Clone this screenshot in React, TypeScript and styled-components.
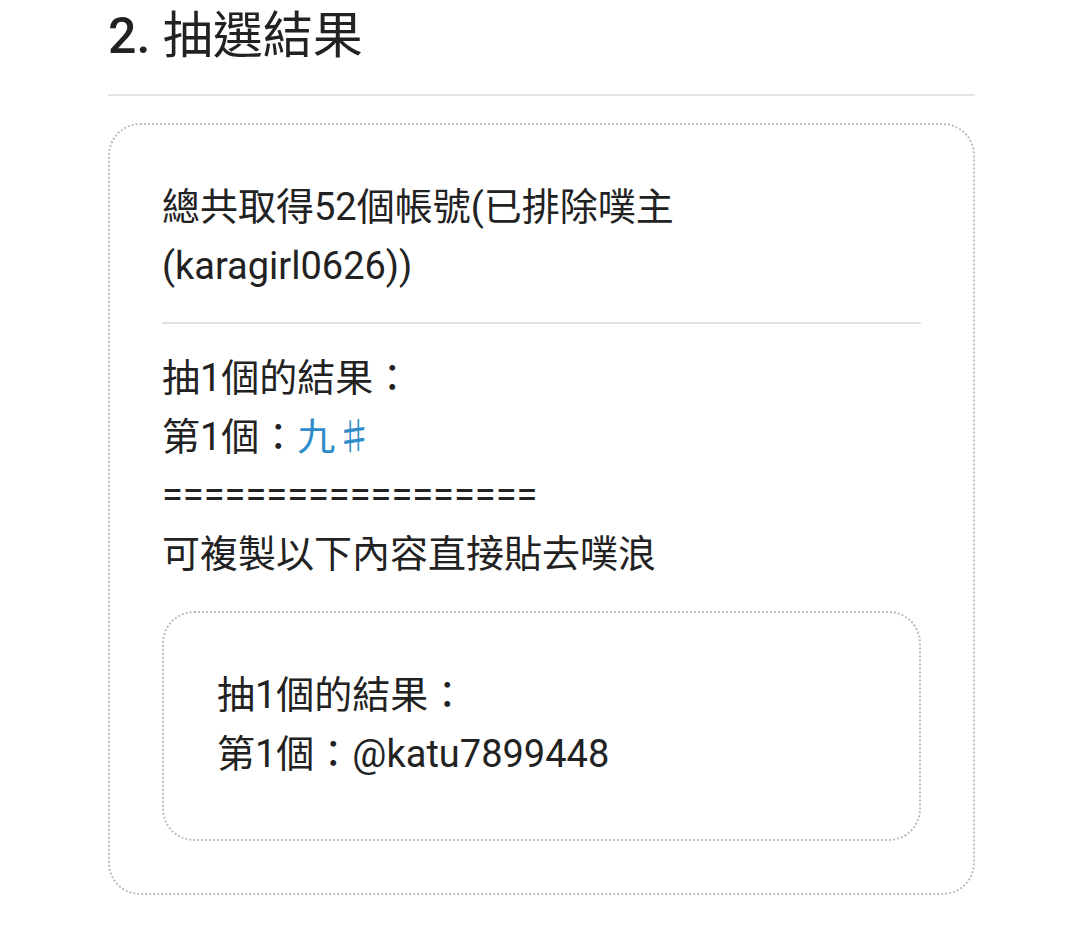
import React from "react";
import styled, { createGlobalStyle } from "styled-components";

const GlobalStyle = createGlobalStyle`
  html, body {
    margin: 0;
    padding: 0;
    background: #ffffff;
  }
  body {
    font-family: Roboto, "Noto Sans CJK TC", "Noto Sans", sans-serif;
    color: #222222;
  }
`;

const Page = styled.main`
  width: 867px;
  margin-left: 108px;
  display: flex;
  flex-direction: column;
`;

const Heading = styled.h2`
  margin: 0;
  padding: 6px 0 28px;
  font-size: 50px;
  line-height: 60px;
  font-weight: 400;
  color: #222222;
  border-bottom: 2px solid #e4e4e4;
`;

const HeadingNum = styled.span`
  font-weight: 500;
`;

const Card = styled.section`
  margin-top: 27px;
  border: 2px dotted #bdbdbd;
  border-radius: 32px;
  padding: 53px 52px 52px;
  font-size: 38px;
  line-height: 58.5px;
`;

const Summary = styled.p`
  margin: 0;
`;

const Divider = styled.hr`
  margin: 27px 0 25px;
  border: none;
  border-top: 2px solid #e2e2e2;
  height: 0;
`;

const Line = styled.div`
  white-space: nowrap;
`;

const Winner = styled.a`
  color: #2d8bc8;
  text-decoration: none;
`;

const CopyBox = styled.div`
  margin-top: 28px;
  border: 2px dotted #bdbdbd;
  border-radius: 32px;
  padding: 53px 53px 56px;
`;

export default function App() {
  return (
    <>
      <GlobalStyle />
      <Page>
        <Heading>
          <HeadingNum>2.</HeadingNum> 抽選結果
        </Heading>
        <Card>
          <Summary>總共取得52個帳號(已排除噗主(karagirl0626))</Summary>
          <Divider />
          <Line>抽1個的結果：</Line>
          <Line>
            第1個：<Winner href="#">九♯</Winner>
          </Line>
          <Line>==================</Line>
          <Line>可複製以下內容直接貼去噗浪</Line>
          <CopyBox>
            <Line>抽1個的結果：</Line>
            <Line>第1個：@katu7899448</Line>
          </CopyBox>
        </Card>
      </Page>
    </>
  );
}
